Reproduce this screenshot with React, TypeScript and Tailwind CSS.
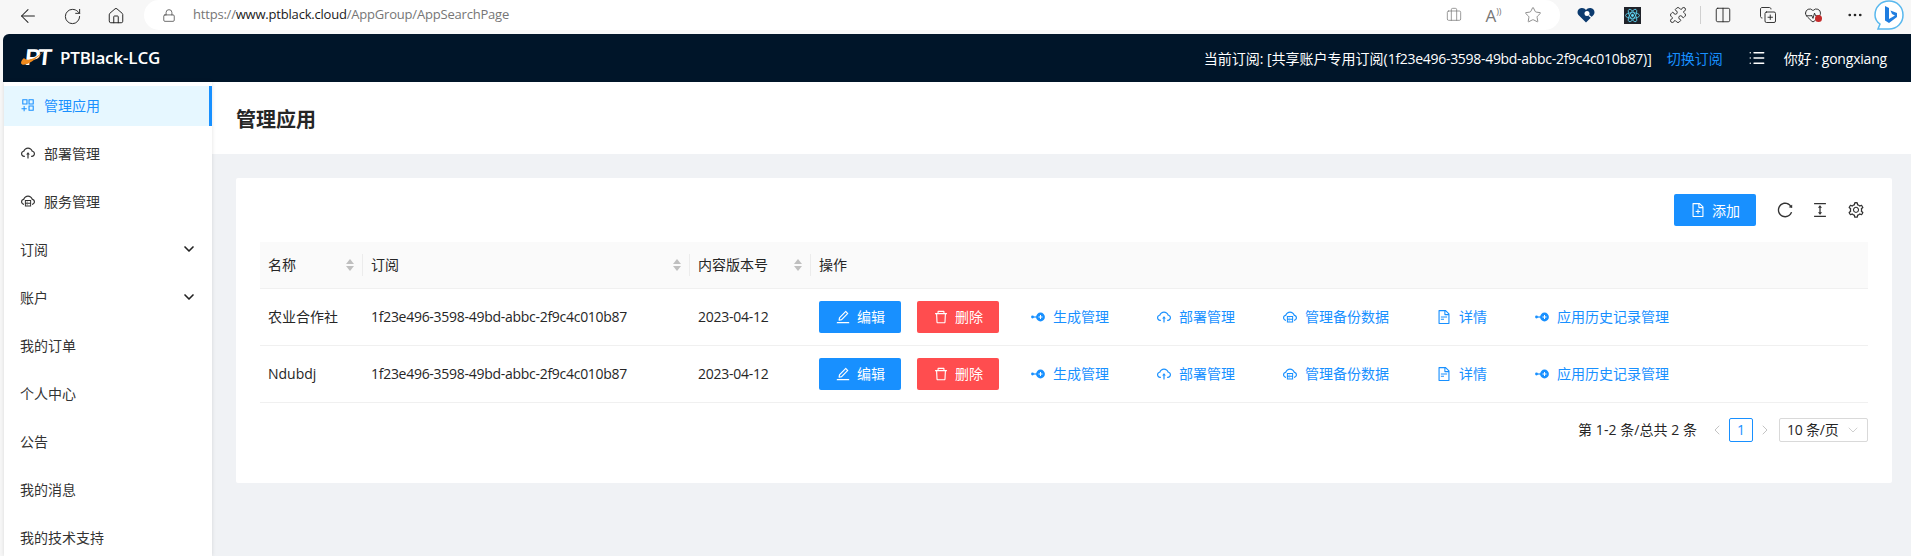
import React from "react";
import { ArrowLeft, RotateCw, Home, Lock, Briefcase, Star, Puzzle, Columns2, MoreHorizontal, ChevronDown, ChevronLeft, ChevronRight, List, HeartPulse, CopyPlus } from "lucide-react";
import { AiOutlineEdit, AiOutlineDelete, AiOutlineCloudUpload, AiOutlineCloudServer, AiOutlineFileText, AiOutlineFileAdd, AiOutlineReload, AiOutlineColumnHeight, AiOutlineSetting, AiOutlineAppstoreAdd } from "react-icons/ai";

const UUID = "1f23e496-3598-49bd-abbc-2f9c4c010b87";

function NodeIcon() {
  return (
    <svg width="14" height="14" viewBox="0 0 14 14" className="shrink-0">
      <circle cx="1.5" cy="7" r="1.4" fill="#1890ff" />
      <rect x="1.5" y="6.4" width="6" height="1.2" fill="#1890ff" />
      <circle cx="9.5" cy="7" r="4.4" fill="#1890ff" />
      <rect x="7.5" y="6.5" width="4" height="1" fill="#fff" />
      <rect x="9" y="5" width="1" height="4" fill="#fff" />
    </svg>
  );
}

function Sorter() {
  return (
    <svg width="10" height="14" viewBox="0 0 10 14" className="shrink-0">
      <path d="M5 1 L9 6 H1 Z" fill="#bfbfbf" />
      <path d="M5 13 L9 8 H1 Z" fill="#bfbfbf" />
    </svg>
  );
}

function Logo() {
  return (
    <div className="relative w-[28px] h-[24px] shrink-0">
      <span className="absolute left-[4px] top-[-2px] -skew-x-6 text-[23px] leading-[26px] font-bold text-white font-['Liberation_Sans',sans-serif] tracking-[-2.5px]">PT</span>
      <svg className="absolute left-0 top-0" width="28" height="24" viewBox="0 0 28 24">
        <path d="M0 17 C1 21 10 19 25 3 C15 13 6 16 3 12 C1 14 0 15 0 17 Z" fill="#f08a1c" />
      </svg>
    </div>
  );
}

function Bing() {
  return (
    <svg width="30" height="32" viewBox="0 0 30 32">
      <path d="M15 2 C23 2 29 8 29 16 C29 24 23 30 15 30 L4 30 L6 25 C3 23 1 20 1 16 C1 8 7 2 15 2 Z" fill="#fff" stroke="#58b8ee" strokeWidth="1.5" />
      <path d="M11 7 L15 9 V20 L21 16.500 L18 15 L16.500 11.500 L23 14 V18 L15 24 L11 21.500 Z" fill="#1f7de0" />
    </svg>
  );
}

function ReactExt() {
  return (
    <svg width="17" height="17" viewBox="0 0 17 17">
      <rect width="17" height="17" fill="#20232a" />
      <g fill="none" stroke="#61dafb" strokeWidth="0.8">
        <ellipse cx="8.500" cy="8.500" rx="7" ry="2.800" />
        <ellipse cx="8.500" cy="8.500" rx="7" ry="2.800" transform="rotate(60 8.500 8.500)" />
        <ellipse cx="8.500" cy="8.500" rx="7" ry="2.800" transform="rotate(120 8.500 8.500)" />
      </g>
      <circle cx="8.500" cy="8.500" r="1.400" fill="#61dafb" />
    </svg>
  );
}

function HeartExt() {
  return (
    <svg width="18" height="16" viewBox="0 0 18 16">
      <path d="M9 15.500 L1.500 8 C-0.500 5.500 0.500 1.500 4.500 1 C6.500 0.800 8 1.800 9 3 C10 1.800 11.500 0.800 13.500 1 C17.500 1.500 18.500 5.500 16.500 8 Z" fill="#0b3a6e" />
      <circle cx="10" cy="6.500" r="2.500" fill="#fff" />
      <path d="M12 8.500 L15 11" stroke="#fff" strokeWidth="1.400" />
    </svg>
  );
}

const TB = "w-[44px] flex justify-center items-center shrink-0 text-[#222]";

function Toolbar() {
  return (
    <div className="h-[34px] bg-[#f7f7f7] flex items-start shrink-0 pl-[6px]">
      <div className="h-[32px] flex items-center">
        <div className={TB}><ArrowLeft size={22} strokeWidth={1.100} /></div>
        <div className={TB}><RotateCw size={19} strokeWidth={1.200} /></div>
        <div className={TB}><Home size={18} strokeWidth={1.300} /></div>
      </div>
      <div className="ml-[6px] w-[1416px] h-[30px] bg-white rounded-r-[15px] rounded-l-[15px] flex items-center shrink-0">
        <div className="ml-[18px] w-[14px] flex justify-center text-[#444]"><Lock size={15} strokeWidth={1.300} /></div>
        <div className="ml-[17px] text-[13px] tracking-[-0.2px] text-[#767676]">
          https://<span className="text-[#1a1a1a]">www.ptblack.cloud</span>/AppGroup/AppSearchPage
        </div>
        <div className="ml-auto flex items-center mr-[7px] text-[#777]">
          <div className="w-[40px] flex justify-center"><Briefcase size={16} strokeWidth={1.100} /></div>
          <div className="w-[39px] flex justify-center text-[17px] leading-none">A<span className="text-[9px]">))</span></div>
          <div className="w-[40px] flex justify-center"><Star size={18} strokeWidth={1.100} /></div>
        </div>
      </div>
      <div className="h-[30px] flex items-center ml-[4px]">
        <div className="w-[44px] flex justify-center"><HeartExt /></div>
        <div className="w-[48px] flex justify-center"><ReactExt /></div>
        <div className="w-[44px] flex justify-center text-[#222]"><Puzzle size={18} strokeWidth={1.200} /></div>
        <div className="w-px h-[18px] bg-[#d0d0d0]" />
        <div className="w-[44px] flex justify-center text-[#222]"><Columns2 size={18} strokeWidth={1.200} /></div>
        <div className="w-[46px] flex justify-center text-[#222]"><CopyPlus size={18} strokeWidth={1.200} /></div>
        <div className="w-[44px] flex justify-center text-[#222] relative">
          <HeartPulse size={18} strokeWidth={1.200} />
          <span className="absolute left-[24px] top-[9px] w-[7px] h-[7px] rounded-full bg-[#c42b2b]" />
        </div>
        <div className="w-[39px] flex justify-center text-[#222]"><MoreHorizontal size={18} strokeWidth={1.600} /></div>
        <div className="w-[30px] flex justify-center"><Bing /></div>
      </div>
    </div>
  );
}

function Header() {
  return (
    <div className="h-[48px] bg-[#001529] rounded-tl-[6px] flex items-center text-white shrink-0 ml-[3px] pl-[18px]">
      <Logo />
      <span className="ml-[11px] text-[17px] font-semibold tracking-[-0.15px]">PTBlack-LCG</span>
      <div className="ml-auto flex items-center text-[14px] pr-[24px]">
        <span>当前订阅: [共享账户专用订阅(<span className="tracking-[-0.3px]">{UUID}</span>)]</span>
        <span className="ml-[15px] text-[#1890ff]">切换订阅</span>
        <List size={18} strokeWidth={1.800} className="ml-[25px]" />
        <span className="ml-[18px] tracking-[-0.2px]">你好 : gongxiang</span>
      </div>
    </div>
  );
}

const MENU: { label: string; icon?: React.ReactNode; chevron?: boolean }[] = [
  { label: "部署管理", icon: <AiOutlineCloudUpload size={16} /> },
  { label: "服务管理", icon: <AiOutlineCloudServer size={16} /> },
  { label: "订阅", chevron: true },
  { label: "账户", chevron: true },
  { label: "我的订单" },
  { label: "个人中心" },
  { label: "公告" },
  { label: "我的消息" },
  { label: "我的技术支持" },
];

function Sidebar() {
  return (
    <div className="w-[208px] ml-[4px] bg-white shrink-0 pt-[4px] shadow-[0_0_4px_rgba(0,0,0,0.12)] z-10 overflow-hidden">
      <div className="h-[40px] bg-[#e6f7ff] border-r-[3px] border-[#1890ff] flex items-center pl-[16px] pb-[2px] text-[#1890ff] text-[14px] mb-[8px]">
        <AiOutlineAppstoreAdd size={16} className="mr-[8px]" />
        管理应用
      </div>
      {MENU.map((m) => (
        <div key={m.label} className="h-[40px] flex items-center pl-[16px] pr-[15px] pb-[2px] text-[14px] text-[#333] mb-[8px]">
          {m.icon && <span className="mr-[8px] flex">{m.icon}</span>}
          {m.label}
          {m.chevron && <ChevronDown size={16} strokeWidth={2.500} className="ml-auto text-[#222]" />}
        </div>
      ))}
    </div>
  );
}

function LinkBtn({ icon, label }: { icon: React.ReactNode; label: string }) {
  return (
    <span className="flex items-center text-[#1890ff] text-[14px] gap-[8px]">
      <span className="flex w-[14px] justify-center">{icon}</span>
      {label}
    </span>
  );
}

function Ops() {
  return (
    <div className="flex items-center">
      <button className="w-[82px] h-[32px] bg-[#1890ff] rounded-[2px] text-white text-[14px] flex items-center justify-center gap-[6px]"><AiOutlineEdit size={16} />编辑</button>
      <button className="ml-[16px] w-[82px] h-[32px] bg-[#ff4d4f] rounded-[2px] text-white text-[14px] flex items-center justify-center gap-[6px]"><AiOutlineDelete size={16} />删除</button>
      <div className="ml-[32px] flex items-center gap-[48px]">
        <LinkBtn icon={<NodeIcon />} label="生成管理" />
        <LinkBtn icon={<AiOutlineCloudUpload size={16} className="shrink-0" />} label="部署管理" />
        <LinkBtn icon={<AiOutlineCloudServer size={16} className="shrink-0" />} label="管理备份数据" />
        <LinkBtn icon={<AiOutlineFileText size={16} className="shrink-0" />} label="详情" />
        <LinkBtn icon={<NodeIcon />} label="应用历史记录管理" />
      </div>
    </div>
  );
}

function HeadCell({ label, sort }: { label: string; sort?: boolean }) {
  return (
    <th className="p-0 pl-[8px] font-normal text-left">
      <div className={"flex items-center justify-between h-[22px] pr-[7px] " + (sort ? "border-r border-[#ececec]" : "")}>
        {label}
        {sort && <Sorter />}
      </div>
    </th>
  );
}

function Row({ name }: { name: string }) {
  return (
    <tr className="h-[57px] border-b border-[#f0f0f0]">
      <td className="pl-[8px]">{name}</td>
      <td className="pl-[8px] tracking-[-0.28px]">{UUID}</td>
      <td className="pl-[8px] tracking-[-0.25px]">2023-04-12</td>
      <td className="pl-[8px]"><Ops /></td>
    </tr>
  );
}

function Card() {
  return (
    <div className="mt-[24px] mx-[24px] w-[1656px] h-[305px] bg-white rounded-[2px] px-[24px] pt-[16px]">
      <div className="flex items-center justify-end h-[32px] text-[#333]">
        <button className="w-[82px] h-[32px] bg-[#1890ff] rounded-[2px] text-white text-[14px] flex items-center justify-center gap-[6px]"><AiOutlineFileAdd size={16} />添加</button>
        <AiOutlineReload size={18} className="ml-[20px]" />
        <AiOutlineColumnHeight size={18} className="ml-[17px]" />
        <AiOutlineSetting size={18} className="ml-[18px] mr-[3px]" />
      </div>
      <table className="mt-[16px] w-full table-fixed border-collapse text-[14px] text-[#262626]">
        <colgroup>
          <col className="w-[103px]" />
          <col className="w-[327px]" />
          <col className="w-[121px]" />
          <col />
        </colgroup>
        <thead>
          <tr className="h-[46px] bg-[#fafafa] border-b border-[#f0f0f0]">
            <HeadCell label="名称" sort />
            <HeadCell label="订阅" sort />
            <HeadCell label="内容版本号" sort />
            <HeadCell label="操作" />
          </tr>
        </thead>
        <tbody>
          <Row name="农业合作社" />
          <Row name="Ndubdj" />
        </tbody>
      </table>
      <div className="mt-[15px] flex items-center justify-end h-[24px] text-[14px] text-[#262626]">
        <span className="tracking-[0.05px]">第 1-2 条/总共 2 条</span>
        <ChevronLeft size={16} strokeWidth={1.400} className="ml-[12px] text-[#bfbfbf]" />
        <span className="ml-[4px] w-[24px] h-[24px] border border-[#1890ff] rounded-[2px] text-[#1890ff] flex items-center justify-center">1</span>
        <ChevronRight size={16} strokeWidth={1.400} className="ml-[4px] text-[#bfbfbf]" />
        <div className="ml-[6px] w-[89px] h-[24px] border border-[#d9d9d9] rounded-[2px] flex items-center pl-[7px] pr-[6px] tracking-[-0.2px]">
          10 条/页
          <ChevronDown size={16} strokeWidth={1.100} className="ml-auto text-[#bfbfbf]" />
        </div>
      </div>
    </div>
  );
}

export default function App() {
  return (
    <div className="w-[1911px] h-[556px] overflow-hidden flex flex-col bg-[#f7f7f7] font-['Open_Sans','Noto_Sans_CJK_SC',sans-serif]">
      <Toolbar />
      <Header />
      <div className="flex flex-1 min-h-0">
        <Sidebar />
        <div className="flex-1 bg-[#f0f2f5] min-w-0">
          <div className="h-[72px] bg-white flex items-center pl-[24px] pt-[3px] text-[20px] font-bold text-[#262626]">管理应用</div>
          <Card />
        </div>
      </div>
    </div>
  );
}
